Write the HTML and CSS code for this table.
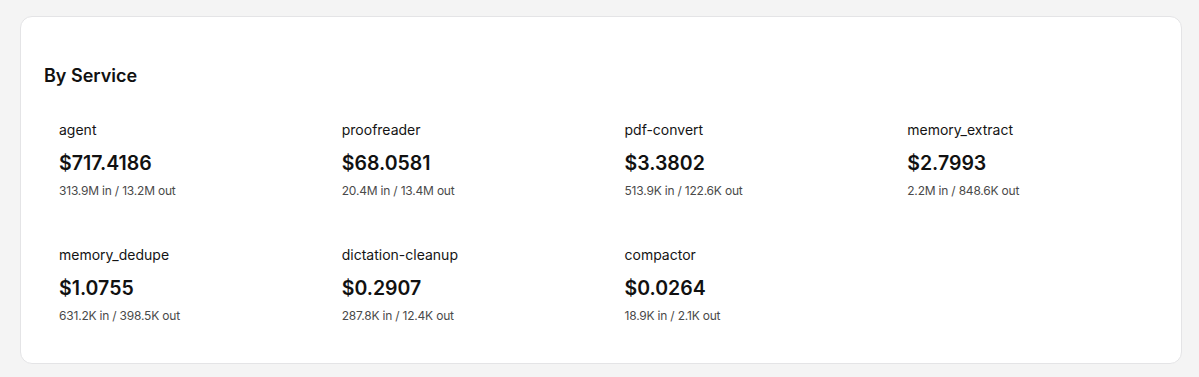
FILE: index.html
```html
<!DOCTYPE html>
<html lang="en">
<head>
<meta charset="utf-8">
<title>By Service</title>
<link rel="stylesheet" href="styles.css">
</head>
<body>
<section class="card">
  <h2 class="card-title">By Service</h2>
  <div class="service-grid">
    <div class="service">
      <div class="service-name">agent</div>
      <div class="service-cost">$717.4186</div>
      <div class="service-tokens">313.9M in / 13.2M out</div>
    </div>
    <div class="service">
      <div class="service-name">proofreader</div>
      <div class="service-cost">$68.0581</div>
      <div class="service-tokens">20.4M in / 13.4M out</div>
    </div>
    <div class="service">
      <div class="service-name">pdf-convert</div>
      <div class="service-cost">$3.3802</div>
      <div class="service-tokens">513.9K in / 122.6K out</div>
    </div>
    <div class="service">
      <div class="service-name">memory_extract</div>
      <div class="service-cost">$2.7993</div>
      <div class="service-tokens">2.2M in / 848.6K out</div>
    </div>
    <div class="service">
      <div class="service-name">memory_dedupe</div>
      <div class="service-cost">$1.0755</div>
      <div class="service-tokens">631.2K in / 398.5K out</div>
    </div>
    <div class="service">
      <div class="service-name">dictation-cleanup</div>
      <div class="service-cost">$0.2907</div>
      <div class="service-tokens">287.8K in / 12.4K out</div>
    </div>
    <div class="service">
      <div class="service-name">compactor</div>
      <div class="service-cost">$0.0264</div>
      <div class="service-tokens">18.9K in / 2.1K out</div>
    </div>
  </div>
</section>
</body>
</html>
```

FILE: styles.css
```css
* { box-sizing: border-box; }

html, body {
  margin: 0;
  padding: 0;
  background: #f4f4f4;
  font-family: Inter, "Noto Sans", "Liberation Sans", sans-serif;
  color: #111111;
}

body {
  padding: 16px 17px 0 20px;
}

.card {
  width: 1162px;
  background: #ffffff;
  border: 1px solid #e4e4e6;
  border-radius: 12px;
  padding: 45px 24px 23px 23px;
}

.card-title {
  margin: 0;
  font-size: 18px;
  line-height: 28px;
  font-weight: 600;
  color: #111111;
}

.service-grid {
  margin-top: 14px;
  display: grid;
  grid-template-columns: repeat(4, 1fr);
  column-gap: 18px;
  row-gap: 14px;
}

.service {
  padding: 16px 15px;
}

.service-name {
  font-size: 14px;
  line-height: 20px;
  font-weight: 400;
  color: #141414;
}

.service-cost {
  margin-top: 9px;
  font-size: 19.5px;
  line-height: 28px;
  font-weight: 600;
  color: #111111;
}

.service-tokens {
  margin-top: 6px;
  font-size: 12px;
  line-height: 16px;
  letter-spacing: -0.2px;
  color: #4a4a4a;
}
```
